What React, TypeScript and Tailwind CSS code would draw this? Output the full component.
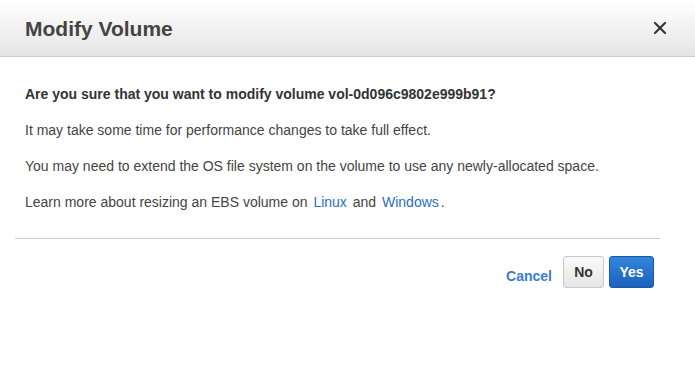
import { X } from 'lucide-react';

export default function App() {
  return (
    <div className="w-[695px] h-[377px] bg-white overflow-hidden font-['Liberation_Sans',Arial,sans-serif] text-[#444]">
      <div className="h-[57px] flex items-center justify-between pl-[25px] pr-[25px] bg-gradient-to-b from-white to-[#e5e5e5] border-b border-[#cfcfcf]">
        <h1 className="text-[21px] font-bold text-[#444] mt-[1px]">Modify Volume</h1>
        <X size={20} strokeWidth={2.6} className="text-[#333]" />
      </div>

      <div className="pt-[27px] pb-[26px] px-[25px] text-[14px] leading-[20px]">
        <p className="font-bold text-[#333] mb-[16px]">
          Are you sure that you want to modify volume vol-0d096c9802e999b91?
        </p>
        <p className="mb-[16px]">It may take some time for performance changes to take full effect.</p>
        <p className="mb-[16px]">
          You may need to extend the OS file system on the volume to use any newly-allocated space.
        </p>
        <p>
          Learn more about resizing an EBS volume on{' '}
          <a className="text-[#2a6ec5] mx-[2px]">Linux</a> and{' '}
          <a className="text-[#2a6ec5] mx-[2px]">Windows</a>.
        </p>
      </div>

      <div className="mx-[15px] w-[645px] border-t border-[#cccccc]" />

      <div className="w-[654px] flex justify-end items-center pt-[17px]">
        <button className="text-[14px] font-bold text-[#3a7dd0] mt-[8px] mr-[11px]">Cancel</button>
        <button className="h-[32px] w-[41px] rounded-[3px] border border-[#c8c8c8] bg-gradient-to-b from-[#fafafa] to-[#e6e6e6] text-[14px] font-bold text-[#333] mr-[5px]">
          No
        </button>
        <button className="h-[32px] w-[45px] rounded-[3px] border border-[#1a5aae] bg-gradient-to-b from-[#3384dc] to-[#1c62bd] text-[14px] font-bold text-white">
          Yes
        </button>
      </div>
    </div>
  );
}
